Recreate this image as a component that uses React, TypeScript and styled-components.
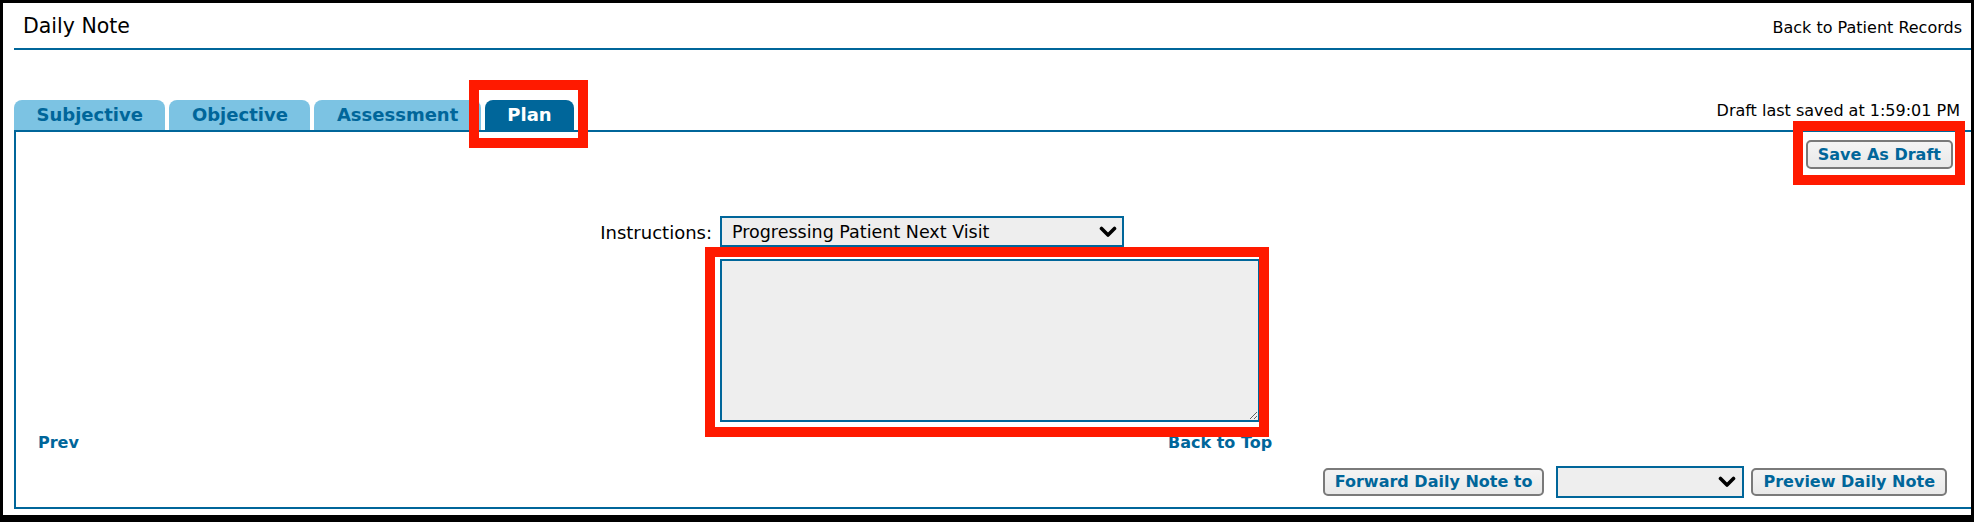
import React from 'react';
import styled, { createGlobalStyle } from 'styled-components';

const BLUE = '#00669a';
const LIGHT = '#7cc3e3';
const RED = '#ff1a00';

const Global = createGlobalStyle`
  html, body { margin: 0; padding: 0; background: #fff; }
  body { font-family: "DejaVu Sans", Verdana, sans-serif; }
  * { box-sizing: border-box; }
`;

const Frame = styled.div`
  position: relative;
  width: 1974px;
  height: 522px;
  border: 3px solid #000;
  border-bottom-width: 7px;
  background: #fff;
  overflow: hidden;
  padding-left: 11px;
  font-family: "DejaVu Sans", Verdana, sans-serif;
  color: #000;
`;

const Header = styled.header`
  display: flex;
  justify-content: space-between;
  align-items: baseline;
  padding: 11px 9px 8px 9px;
  border-bottom: 2px solid ${BLUE};
`;

const Title = styled.h1`
  margin: 0;
  font-size: 20.5px;
  font-weight: normal;
  line-height: 24px;
`;

const HeaderLink = styled.a`
  font-size: 16px;
  line-height: 24px;
  color: #000;
  text-decoration: none;
`;

const TabRow = styled.div`
  display: flex;
  align-items: flex-end;
  gap: 4px;
  margin-top: 50px;
`;

const Tab = styled.div<{ $active?: boolean }>`
  height: 30px;
  line-height: 30px;
  padding: 0 22.5px;
  border-radius: 8px 8px 0 0;
  background: ${p => (p.$active ? BLUE : LIGHT)};
  color: ${p => (p.$active ? '#fff' : BLUE)};
  font-size: 18px;
  font-weight: bold;
`;

const SavedNote = styled.div`
  margin-left: auto;
  padding-right: 11px;
  margin-bottom: 9px;
  font-size: 16px;
  line-height: 20px;
`;

const Panel = styled.section`
  border: 2px solid ${BLUE};
  border-right: none;
  padding-bottom: 9px;
`;

const TopActions = styled.div`
  display: flex;
  justify-content: flex-end;
  padding: 8px 18px 0 0;
`;

const Button = styled.button<{ $h?: number }>`
  height: ${p => p.$h ?? 29}px;
  padding: 0 10px;
  border: 2px solid #7a7a7a;
  border-radius: 5px;
  background: linear-gradient(#f4f4f4, #e9e9e9);
  color: ${BLUE};
  font-family: "DejaVu Sans", Verdana, sans-serif;
  font-size: 16px;
  font-weight: bold;
  line-height: 1;
  cursor: pointer;
`;

const FormGrid = styled.div`
  display: grid;
  grid-template-columns: 696px 540px;
  column-gap: 8px;
  row-gap: 12px;
  margin-top: 47px;
  align-items: center;
`;

const Label = styled.label`
  justify-self: end;
  font-size: 18px;
  line-height: 20px;
  padding-top: 3px;
`;

const SelectBox = styled.div<{ $w: number; $h: number; $pr: number }>`
  width: ${p => p.$w}px;
  height: ${p => p.$h}px;
  border: 2px solid ${BLUE};
  background: #eeeeee;
  display: flex;
  align-items: center;
  justify-content: space-between;
  padding: 0 ${p => p.$pr}px 0 10px;
  font-size: 17.5px;
  color: #000;
`;

const NoteArea = styled.textarea`
  grid-column: 2;
  width: 540px;
  height: 163px;
  border: 2px solid ${BLUE};
  background: #eeeeee;
  resize: both;
  margin: 0;
  font-family: "DejaVu Sans", Verdana, sans-serif;
  font-size: 16px;
  outline: none;
`;

const NavRow = styled.div`
  display: grid;
  grid-template-columns: 1130px auto;
  padding-left: 22px;
  margin-top: 11px;
`;

const NavLink = styled.a`
  font-size: 16px;
  font-weight: bold;
  line-height: 20px;
  color: ${BLUE};
  text-decoration: none;
  justify-self: start;
`;

const BottomActions = styled.div`
  display: flex;
  justify-content: flex-end;
  align-items: center;
  padding-right: 24px;
  margin-top: 13px;
`;

const Spacer = styled.span<{ $w: number }>`
  display: inline-block;
  width: ${p => p.$w}px;
`;

const Highlight = styled.div<{ $x: number; $y: number; $w: number; $h: number }>`
  position: absolute;
  left: ${p => p.$x - 3}px;
  top: ${p => p.$y - 3}px;
  width: ${p => p.$w}px;
  height: ${p => p.$h}px;
  border: 10px solid ${RED};
  pointer-events: none;
`;

const Chevron = () => (
  <svg width="18" height="12" viewBox="0 0 18 12" aria-hidden="true">
    <polyline points="2.5,2.5 9,9 15.5,2.5" fill="none" stroke="#000" strokeWidth="3.6" strokeLinecap="round" strokeLinejoin="round" />
  </svg>
);

export default function App() {
  return (
    <>
      <Global />
      <Frame>
        <Header>
          <Title>Daily Note</Title>
          <HeaderLink href="#">Back to Patient Records</HeaderLink>
        </Header>

        <TabRow>
          <Tab>Subjective</Tab>
          <Tab>Objective</Tab>
          <Tab>Assessment</Tab>
          <Tab $active>Plan</Tab>
          <SavedNote>Draft last saved at 1:59:01 PM</SavedNote>
        </TabRow>

        <Panel>
          <TopActions>
            <Button>Save As Draft</Button>
          </TopActions>

          <FormGrid>
            <Label>Instructions:</Label>
            <SelectBox $w={404} $h={31} $pr={5}>
              <span>Progressing Patient Next Visit</span>
              <Chevron />
            </SelectBox>
            <NoteArea aria-label="Plan instructions" />
          </FormGrid>

          <NavRow>
            <NavLink href="#">Prev</NavLink>
            <NavLink href="#">Back to Top</NavLink>
          </NavRow>

          <BottomActions>
            <Button $h={28}>Forward Daily Note to</Button>
            <Spacer $w={12} />
            <SelectBox $w={188} $h={32} $pr={6}>
              <span />
              <Chevron />
            </SelectBox>
            <Spacer $w={7} />
            <Button $h={28}>Preview Daily Note</Button>
          </BottomActions>
        </Panel>

        <Highlight $x={469} $y={80} $w={119} $h={68} />
        <Highlight $x={1793} $y={121} $w={172} $h={64} />
        <Highlight $x={705} $y={247} $w={564} $h={190} />
      </Frame>
    </>
  );
}
